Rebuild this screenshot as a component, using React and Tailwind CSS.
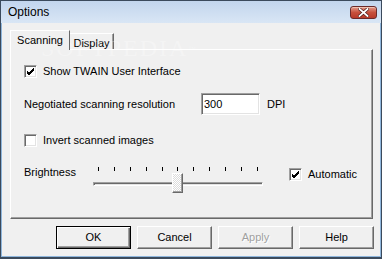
import React from "react";

const raised =
  "border border-t-white border-l-white border-r-[#696969] border-b-[#696969] shadow-[inset_-1px_-1px_0_#a0a0a0]";

function CheckBox({ checked }) {
  return (
    <span className="flex h-[13px] w-[13px] shrink-0 items-center justify-center border border-t-[#a0a0a0] border-l-[#a0a0a0] border-r-white border-b-white bg-white shadow-[inset_1px_1px_0_#696969,inset_-1px_-1px_0_#e3e3e3]">
      {checked && (
        <svg width="9" height="9" viewBox="0 0 9 9">
          <path d="M1 4 L3 6 L8 1 M1 5 L3 7 L8 2 M1 6 L3 8 L8 3" stroke="#000" strokeWidth="1" fill="none" shapeRendering="crispEdges" />
        </svg>
      )}
    </span>
  );
}

function Button({ label, isDefault, disabled }) {
  return (
    <button
      type="button"
      className={`flex h-[23px] w-[75px] items-center justify-center bg-[#f0f0f0] ${
        isDefault
          ? "border border-black shadow-[inset_1px_1px_0_#fff,inset_-1px_-1px_0_#696969,inset_-2px_-2px_0_#a0a0a0]"
          : raised
      } ${disabled ? "text-[#a0a0a0] [text-shadow:1px_1px_0_#fff]" : "text-black"}`}
    >
      {label}
    </button>
  );
}

function Slider() {
  const ticks = Array.from({ length: 11 });
  return (
    <div className="relative h-[28px] w-[170px]">
      <div className="mt-px flex justify-between px-[5px]">
        {ticks.map((_, i) => (
          <span key={i} className="h-[4px] w-px bg-black" />
        ))}
      </div>
      <div className="mt-[11px] h-[4px] border border-t-[#a0a0a0] border-l-[#a0a0a0] border-r-white border-b-white bg-[#e3e3e3] shadow-[inset_1px_1px_0_#696969]" />
      <div
        className={`absolute left-[79px] top-[7px] h-[20px] w-[11px] ${raised} bg-[repeating-conic-gradient(#ffffff_0_25%,#dcdcdc_0_50%)] bg-[length:2px_2px]`}
      />
    </div>
  );
}

export default function App() {
  return (
    <div
      className="relative flex h-[259px] w-[382px] flex-col overflow-hidden border border-b-2 border-[#3b4a5c] bg-[#f0f0f0] text-[11px] text-black"
      style={{ fontFamily: '"Liberation Sans", Arial, sans-serif' }}
    >
      {/* title bar */}
      <div className="flex h-[22px] shrink-0 items-center justify-between bg-gradient-to-b from-[#c2d5ed] to-[#d9e6f5] pl-[7px] pr-[4px]">
        <span className="text-[12px] text-black">Options</span>
        <span className="flex h-[13px] w-[27px] items-center justify-center rounded-[3px] border border-[#6b2a2a] bg-gradient-to-b from-[#e39a8c] via-[#c7503c] to-[#b83a2a] shadow-[inset_0_1px_0_#f0c0b0]">
          <svg width="11" height="9" viewBox="0 0 11 9">
            <path d="M1.5 1 L9.5 8 M9.5 1 L1.5 8" stroke="#4a1a1a" strokeWidth="3.2" strokeLinecap="square" />
            <path d="M1.5 1 L9.5 8 M9.5 1 L1.5 8" stroke="#fff" strokeWidth="1.8" strokeLinecap="square" />
          </svg>
        </span>
      </div>

      <div className="flex flex-1 flex-col border-x border-b border-[#8fb6dc] pl-[8px]">
        {/* tabs */}
        <div className="mt-[7px] flex items-end">
          <div className="relative z-10 -mb-px flex h-[20px] w-[60px] items-start justify-center border border-b-0 border-t-white border-l-white border-r-[#696969] bg-[#f0f0f0] pt-[1px]">
            <span>Scanning</span>
          </div>
          <div className="flex h-[16px] w-[44px] items-start justify-center border border-b-0 border-t-white border-l-0 border-r-[#696969] pt-[1px] shadow-[inset_-1px_0_0_#a0a0a0]">
            <span>Display</span>
          </div>
        </div>

        {/* panel */}
        <div className="flex h-[170px] w-[363px] flex-col border border-t-white border-l-white border-r-[#696969] border-b-[#696969] pl-[13px] shadow-[inset_-1px_-1px_0_#a0a0a0]">
          <div className="mt-[14px] flex h-[14px] items-center gap-[6px]">
            <CheckBox checked />
            <span>Show TWAIN User Interface</span>
          </div>

          <div className="mt-[15px] flex h-[22px] items-center">
            <span className="w-[177px]">Negotiated scanning resolution</span>
            <span className="flex h-[22px] w-[59px] items-center border border-t-[#a0a0a0] border-l-[#a0a0a0] border-r-white border-b-white bg-white pl-[2px] shadow-[inset_1px_1px_0_#696969,inset_-1px_-1px_0_#e3e3e3]">
              300
            </span>
            <span className="ml-[7px]">DPI</span>
          </div>

          <div className="mt-[18px] flex h-[14px] items-center gap-[6px]">
            <CheckBox />
            <span>Invert scanned images</span>
          </div>

          <div className="mt-[19px] flex h-[28px] items-start">
            <span className="w-[69px] pt-px leading-[11px]">Brightness</span>
            <Slider />
            <div className="ml-[26px] flex items-center gap-[6px]">
              <CheckBox checked />
              <span>Automatic</span>
            </div>
          </div>
        </div>

        {/* buttons */}
        <div className="mt-[7px] flex gap-[6px] pl-[46px]">
          <Button label="OK" isDefault />
          <Button label="Cancel" />
          <Button label="Apply" disabled />
          <Button label="Help" />
        </div>
      </div>

      <span className="pointer-events-none absolute left-[40px] top-[29px] text-[24px] tracking-[2px] text-white/30 [font-family:'Liberation_Serif',serif]">
        SOFTPEDIA<sup className="text-[8px]">™</sup>
      </span>
    </div>
  );
}
